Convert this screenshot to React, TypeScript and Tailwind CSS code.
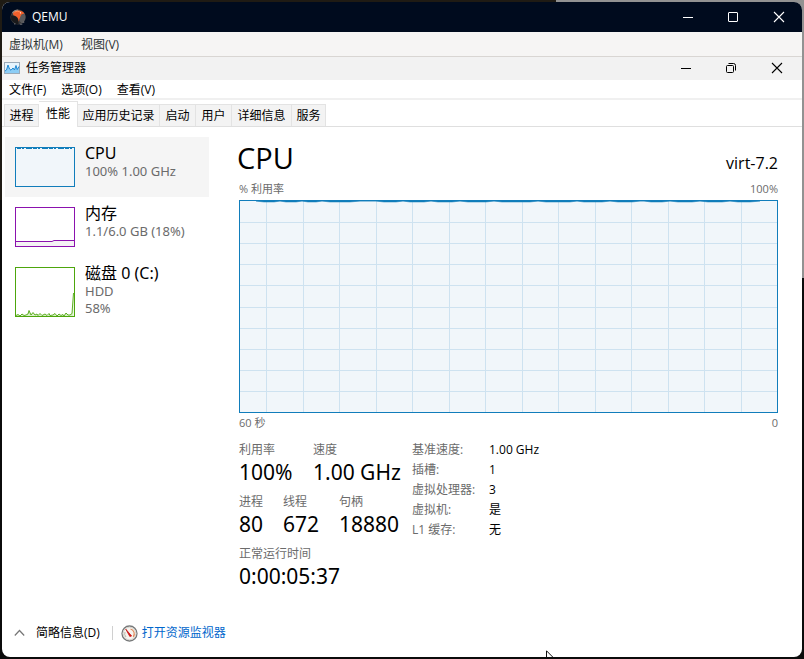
import React from "react";

const latin = "font-['Noto_Sans','Noto_Sans_CJK_SC',sans-serif]";
const ui = "font-['Open_Sans','Noto_Sans_CJK_SC',sans-serif]";

function QemuLogo() {
  return (
    <svg width="16" height="16" viewBox="0 0 16 16" className="shrink-0" aria-hidden="true">
      <circle cx="8" cy="8" r="7.6" fill="#3a3a3c" />
      <path d="M2 3.5A7.6 7.6 0 0 1 8 .4L9 3 4 6z" fill="#8d8985" />
      <path d="M10 5.5 14.9 5A7.6 7.6 0 0 1 12 14.4L9.5 12z" fill="#59595b" />
      <path d="M1 6.5C4 6.2 7 7 8.5 10.5L8.5 15 6 15.2 1.2 11z" fill="#19191b" />
      <path d="M3 4.2C5 1 9.8.6 13 3l1.7 1.6-3.2.9C10.4 7.2 9.6 9.4 8.8 12.8 8.6 9.8 7.6 7.4 3.4 6.2z" fill="#f1602c" />
      <path d="M4.6 3.2C6.5 2 9 2 10.6 3.6" stroke="#ff8d58" fill="none" />
      <rect x="10" y="3.4" width="1" height="1" fill="#fff" />
      <path d="M12.8 13.2h1.5M9.8 15.2h2.5M4 14.9h1.5" stroke="#77777b" />
    </svg>
  );
}

function TaskManagerLogo() {
  return (
    <svg width="16" height="12" viewBox="0 0 16 12" className="shrink-0" aria-hidden="true">
      <rect x=".5" y=".5" width="15" height="11" fill="#e6f4fd" stroke="#9aaab8" />
      <path d="M1 9 2.5 8 4 3 5.5 7 7 8.2 9 6 10.5 8 12 3.5 13.2 7.6 15 4.5V11H1z" fill="#8ccdf5" />
      <path d="M1 9 2.5 8 4 3 5.5 7 7 8.2 9 6 10.5 8 12 3.5 13.2 7.6 15 4.5" fill="none" stroke="#1b86d2" />
    </svg>
  );
}

function WindowButtons({ restored, className }: { restored?: boolean; className: string }) {
  return (
    <div className={`ml-auto flex h-full ${className}`}>
      <button aria-label="最小化" className="flex w-[45px] items-center justify-center">
        <svg width="12" height="12" viewBox="0 0 12 12" fill="none" stroke="currentColor">
          <path d="M1 6.5h10" />
        </svg>
      </button>
      <button aria-label={restored ? "还原" : "最大化"} className="flex w-[45px] items-center justify-center">
        <svg width="12" height="12" viewBox="0 0 12 12" fill="none" stroke="currentColor">
          {restored ? (
            <>
              <rect x="1.5" y="3.5" width="7" height="7" rx="1" />
              <path d="M3.5 1.5h5a2 2 0 0 1 2 2v5" />
            </>
          ) : (
            <rect x="1.5" y="1.5" width="9" height="9" rx=".5" />
          )}
        </svg>
      </button>
      <button aria-label="关闭" className="flex w-[47px] items-center justify-center">
        <svg width="12" height="12" viewBox="0 0 12 12" fill="none" stroke="currentColor" strokeWidth="1.1">
          <path d="m1 1 10 10M11 1 1 11" />
        </svg>
      </button>
    </div>
  );
}

const tabs = [
  { label: "进程", width: "w-[35px]" },
  { label: "性能", width: "w-[39px]", active: true },
  { label: "应用历史记录", width: "w-[82px]" },
  { label: "启动", width: "w-9" },
  { label: "用户", width: "w-9" },
  { label: "详细信息", width: "w-[60px]" },
  { label: "服务", width: "w-[34px]" },
];

function CpuThumb() {
  return (
    <svg width="60" height="40" viewBox="0 0 60 40" className="shrink-0">
      <rect x=".5" y=".5" width="59" height="39" fill="#f1f6fa" stroke="#117dbb" />
      <path d="M2 1.5h56" stroke="#117dbb" strokeDasharray="4 1 2 2 6 1" />
    </svg>
  );
}

function MemoryThumb() {
  return (
    <svg width="60" height="40" viewBox="0 0 60 40" className="shrink-0">
      <rect x=".5" y=".5" width="59" height="39" fill="#fff" stroke="#8b12ae" />
      <path d="M1 34.5h37v-1h21V39H1z" fill="#f4f2f4" />
      <path d="M1 34.5h36l2-1h20" fill="none" stroke="#8b12ae" />
    </svg>
  );
}

function DiskThumb() {
  const line =
    "M1 48.5 3 47.5 5 49 7 47 9 48.5 11 48 13 47 14 43.5 16 48 18 45.5 20 48 22 47 23 48.5 25 46.5 27 48.5 30 47 32 48.5 34 46.5 35 48.5 38 48 40 46.5 42 49 44 47 46 48.5 48 47.5 49 49 51 46 53 48 55 48 57 46.5 58.5 26";
  return (
    <svg width="60" height="50" viewBox="0 0 60 50" className="shrink-0">
      <rect x=".5" y=".5" width="59" height="49" fill="#fff" stroke="#4da60c" />
      <path d={`${line} V49H1z`} fill="#d9efc8" />
      <path d={line} fill="none" stroke="#4da60c" strokeWidth=".9" />
    </svg>
  );
}

const devices = [
  { name: "CPU", details: ["100% 1.00 GHz"], thumb: <CpuThumb />, selected: true },
  { name: "内存", details: ["1.1/6.0 GB (18%)"], thumb: <MemoryThumb /> },
  { name: "磁盘 0 (C:)", details: ["HDD", "58%"], thumb: <DiskThumb /> },
];

const columns = [26.5, 63.5, 99.5, 136.5, 172.5, 209.5, 245.5, 282.5, 318.5, 355.5, 391.5, 428.5, 464.5, 501.5];
const rows = [21.5, 42.5, 63.5, 84.5, 106.5, 127.5, 148.5, 169.5, 190.5];

function UsageChart() {
  return (
    <svg
      viewBox="0 0 537 211"
      preserveAspectRatio="none"
      className="block h-[213px] w-full border border-[#117dbb] bg-[#f1f6fa]"
      role="img"
      aria-label="% 利用率"
    >
      <g stroke="#cee2f0" shapeRendering="crispEdges">
        {columns.map((x) => (
          <path key={x} d={`M${x} 0V211`} />
        ))}
        {rows.map((y) => (
          <path key={y} d={`M0 ${y}H537`} />
        ))}
      </g>
      <path
        d="M16 0 24 1H34L40 0 46 1H56L62 0 68 1H76L82 0 90 1H110L120 0H136L144 1H156L163 0 170 1H184L191 0 198 1H212L220 0 228 1H246L254 0 262 1H290L298 0 306 1H330L337 0 344 1H362L370 0 378 1H392L400 0H404L411 1H422L430 0 438 1H452L460 0 468 1H482L490 0 498 1H510L520 0Z"
        fill="#117dbb"
        stroke="#117dbb"
        strokeWidth=".5"
      />
    </svg>
  );
}

function Stat({ label, value, className = "" }: { label: string; value: string; className?: string }) {
  return (
    <div className={className}>
      <dt className="text-xs leading-5 text-[#6b6b6b]">{label}</dt>
      <dd className={`${latin} whitespace-nowrap text-[21px] leading-6 text-black`}>{value}</dd>
    </div>
  );
}

const specs = [
  ["基准速度:", "1.00 GHz"],
  ["插槽:", "1"],
  ["虚拟处理器:", "3"],
  ["虚拟机:", "是"],
  ["L1 缓存:", "无"],
];

export default function App() {
  return (
    <div className={`relative flex min-h-screen bg-[#0b0b0b] p-0.5 text-xs text-black ${ui}`}>
      <div className="absolute top-0 right-0 h-[278px] w-[248px] bg-[#929292]" />
      <div className="absolute top-0 left-0 h-[200px] w-[556px] bg-[#1f1b14]" />
      <div className="relative flex min-w-0 grow flex-col overflow-hidden rounded-lg bg-white">
        <header className="flex h-[30px] shrink-0 items-center bg-[#000b1e] pl-2 text-white">
          <QemuLogo />
          <span className="ml-1.5">QEMU</span>
          <WindowButtons className="text-white" />
        </header>
        <nav className="flex h-[25px] shrink-0 items-center gap-[18px] border-b border-[#d9d6d3] bg-[#f6f5f4] pt-0.5 pl-[7px] text-[#2e3436]">
          <button>虚拟机(M)</button>
          <button>视图(V)</button>
        </nav>

        <header className="flex h-[23px] shrink-0 items-center bg-[#f2f2f2] pb-0.5 pl-0.5">
          <TaskManagerLogo />
          <span className="ml-1.5">任务管理器</span>
          <WindowButtons restored className="pr-0.5" />
        </header>
        <nav className="flex h-5 shrink-0 items-center gap-[15px] border-b-2 border-[#f0f0f0] pt-0.5 pl-[7px]">
          <button>文件(F)</button>
          <button>选项(O)</button>
          <button>查看(V)</button>
        </nav>

        <div role="tablist" className="flex h-[27px] shrink-0 items-end border-b border-[#dfdfdf] pl-0.5">
          {tabs.map((t) => (
            <button
              key={t.label}
              role="tab"
              aria-selected={!!t.active}
              className={`${t.width} shrink-0 border-t border-r border-[#e3e3e3] whitespace-nowrap first:border-l ${
                t.active ? "-mb-px h-[26px] bg-white pb-0.5" : "h-[22px] bg-[#f3f3f3]"
              }`}
            >
              {t.label}
            </button>
          ))}
        </div>

        <main className="flex grow">
          <aside className="w-[207px] shrink-0 pt-2.5 pl-[3px]">
            {devices.map((d) => (
              <button
                key={d.name}
                className={`flex w-full items-start gap-2.5 p-2.5 text-left ${d.selected ? "h-[60px] bg-[#f5f5f5]" : "min-h-[60px]"}`}
              >
                {d.thumb}
                <span className={`-mt-1 block ${latin}`}>
                  <span className="block text-base leading-5">{d.name}</span>
                  {d.details.map((x) => (
                    <span key={x} className="block text-[13px] leading-[17px] text-[#6b6b6b]">
                      {x}
                    </span>
                  ))}
                </span>
              </button>
            ))}
          </aside>

          <section className="min-w-0 grow pt-[11px] pr-6 pl-7">
            <div className="flex h-[41px] items-baseline justify-between">
              <h1 className="text-[29px] leading-10">CPU</h1>
              <span className="text-base">virt-7.2</span>
            </div>
            <div className="pl-0.5">
              <div className="flex h-[21px] items-center justify-between text-[11px] text-[#6b6b6b]">
                <span>% 利用率</span>
                <span>100%</span>
              </div>
              <UsageChart />
              <div className="flex h-5 items-center justify-between text-[11px] text-[#6b6b6b]">
                <span>60 秒</span>
                <span>0</span>
              </div>

              <div className="mt-[7px] flex">
                <dl className="flex w-[173px] shrink-0 flex-col gap-2">
                  <div className="flex">
                    <Stat label="利用率" value="100%" className="w-[74px]" />
                    <Stat label="速度" value="1.00 GHz" />
                  </div>
                  <div className="flex">
                    <Stat label="进程" value="80" className="w-11" />
                    <Stat label="线程" value="672" className="w-14" />
                    <Stat label="句柄" value="18880" />
                  </div>
                  <Stat label="正常运行时间" value="0:00:05:37" />
                </dl>
                <table className="self-start">
                  <tbody>
                    {specs.map(([k, v]) => (
                      <tr key={k} className="h-5">
                        <th scope="row" className="w-[77px] p-0 text-left font-normal whitespace-nowrap text-[#6b6b6b]">
                          {k}
                        </th>
                        <td className="p-0 whitespace-nowrap">{v}</td>
                      </tr>
                    ))}
                  </tbody>
                </table>
              </div>
            </div>
          </section>
        </main>

        <footer className="flex h-12 shrink-0 items-center pl-3">
          <button className="flex items-center gap-[11px]">
            <svg width="11" height="8" viewBox="0 0 11 8" fill="none" stroke="#777" strokeWidth="1.2" aria-hidden="true">
              <path d="m.8 6.5 4.7-5 4.7 5" />
            </svg>
            <span>简略信息(D)</span>
          </button>
          <span className="ml-3 h-3.5 w-px bg-[#d0d0d0]" />
          <a href="#resource-monitor" className="ml-2 flex items-center gap-1 text-[#0066cc]">
            <svg width="17" height="17" viewBox="0 0 17 17" aria-hidden="true">
              <circle cx="8.5" cy="8.5" r="7.5" fill="#f6f4ef" stroke="#77797a" strokeWidth="1.3" />
              <circle cx="8.5" cy="8.5" r="6.3" fill="none" stroke="#d5d3cd" />
              <path d="M5 12A4.8 4.8 0 0 1 4 7" fill="none" stroke="#b8b8a8" />
              <path d="M9.5 4A5 5 0 0 1 12.3 11.8" fill="none" stroke="#e08a5a" strokeWidth="1.2" />
              <path d="m4.8 4.2 5.8 6.8-1.8.4z" fill="#d11" stroke="#c41414" strokeWidth=".8" />
            </svg>
            打开资源监视器
          </a>
        </footer>
      </div>
      <svg width="7" height="7" viewBox="0 0 7 7" className="absolute bottom-0.5 left-[546px]" aria-hidden="true">
        <path d="M.5 8V.8L7.5 7.8" fill="#fff" stroke="#111" />
      </svg>
    </div>
  );
}
